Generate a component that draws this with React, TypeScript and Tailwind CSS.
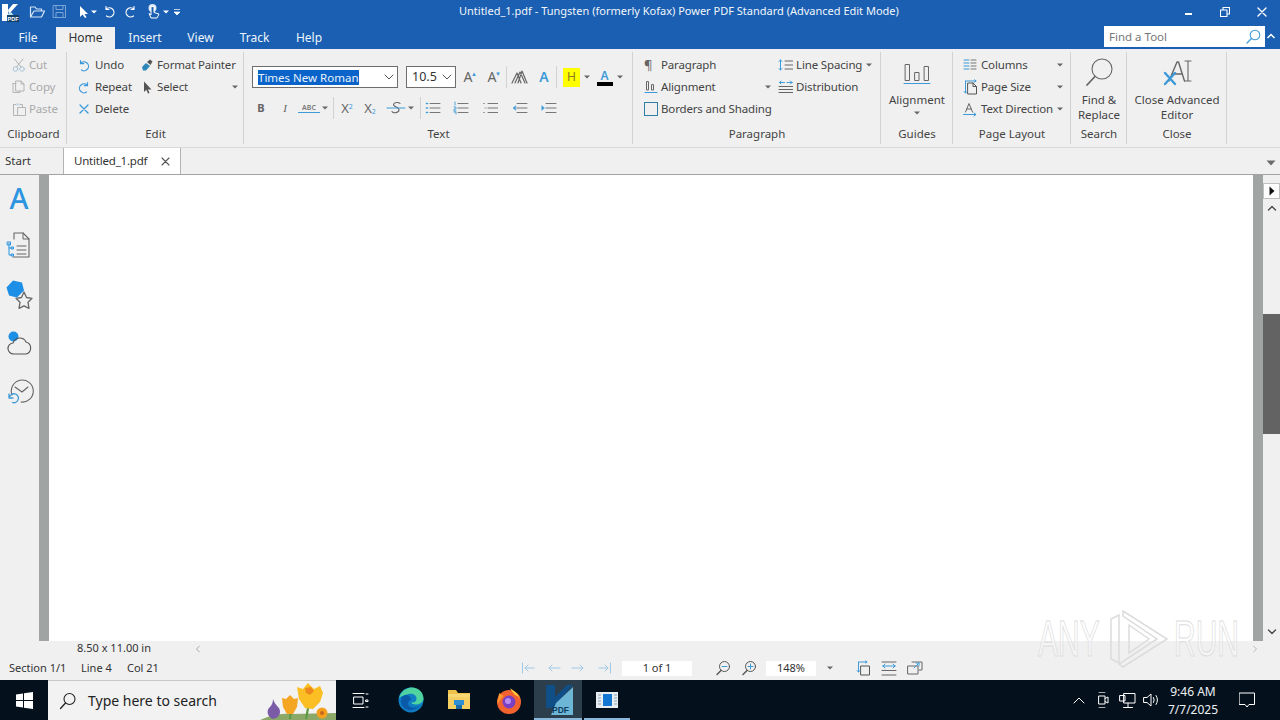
import type { ReactNode } from 'react'

const BLUE = '#3d9ad8'

function Ico({ w = 16, h = 16, children, className = '' }: { w?: number; h?: number; children: ReactNode; className?: string }) {
  return (
    <svg width={w} height={h} viewBox={`0 0 ${w} ${h}`} fill="none" strokeLinecap="round" strokeLinejoin="round" className={`shrink-0 ${className}`}>
      {children}
    </svg>
  )
}

function Caret({ color = '#666', className = '' }: { color?: string; className?: string }) {
  return (
    <svg width="10" height="6" viewBox="0 0 10 6" className={`shrink-0 ${className}`}>
      <path d="M2 1.5h6L5 4.5z" fill={color} />
    </svg>
  )
}

function Row({ icon, label, muted, children, w, iw }: { icon: ReactNode; label: string; muted?: boolean; children?: ReactNode; w?: string; iw?: string }) {
  return (
    <div className={`flex h-[22px] items-center ${w ?? ''}`}>
      <span className={`flex shrink-0 items-center ${iw ?? 'w-[17px]'}`}>{icon}</span>
      <span className={`text-[11.5px] tracking-[-0.15px] whitespace-nowrap ${muted ? 'text-[#a9a9a9]' : 'text-[#444]'}`}>{label}</span>
      {children}
    </div>
  )
}

function Group({ w, label, children }: { w: string; label: string; children: ReactNode }) {
  return (
    <div className={`relative flex h-full shrink-0 flex-col ${w}`}>
      <div className="h-[76px] pt-[5px]">{children}</div>
      <div className="flex h-[18px] items-center justify-center text-[11.5px] text-[#444]">{label}</div>
      <div className="absolute top-[3px] right-0 h-[92px] w-px bg-[#d2d2d2]" />
    </div>
  )
}

function ListIcon({ kind }: { kind: 'bullet' | 'num' | 'plain' | 'out' | 'in' }) {
  const lineX = kind === 'plain' ? 6 : 5
  return (
    <Ico w={16} h={14}>
      <path d={`M${lineX} 2.5h10M${lineX} 7h10M${lineX} 11.5h10`} stroke="#777" />
      {kind === 'bullet' && <path d="M1.5 2.5h1M1.5 7h1M1.5 11.5h1" stroke={BLUE} strokeWidth="1.6" />}
      {kind === 'num' && <path d="M2 1v3M1 6h2v2H1v2h2M1 11h2v2" stroke={BLUE} strokeWidth=".9" />}
      {kind === 'plain' && <path d="M1.5 2.5h1M3 7h1M1.5 11.5h1" stroke="#999" />}
      {kind === 'out' && <path d="M3.5 5L1 7l2.5 2z" fill={BLUE} stroke={BLUE} strokeWidth=".6" />}
      {kind === 'in' && <path d="M1 5l2.5 2L1 9z" fill={BLUE} stroke={BLUE} strokeWidth=".6" />}
    </Ico>
  )
}

function TitleBar() {
  return (
    <div className="flex h-[27px] items-center bg-[#1a5fb2] pb-[4px] text-white">
      <div className="flex w-[459px] shrink-0 items-center">
        <svg width="18" height="18" viewBox="0 0 18 18" className="ml-[1px] mt-[3px]">
          <path d="M1 0h6v17H1z" fill="#fff" />
          <path d="M7 6l5-6h5L8 10z" fill="#fff" />
          <path d="M7 10l3-2 7 9H7z" fill="#bfe0f0" />
          <rect x="6" y="11" width="12" height="7" fill="#123f66" />
          <text x="6.5" y="17" fontSize="5.5" fontWeight="700" fill="#fff" fontFamily="Liberation Sans">PDF</text>
        </svg>
        <Ico w={17} h={15} className="ml-[10px]">
          <path d="M1.5 13V3h4.5l1.500 2h5v2M1.5 13h11l3-6H5z" stroke="#d6e6f6" strokeWidth="1.2" />
        </Ico>
        <Ico w={15} h={15} className="ml-[6px]">
          <path d="M1.5 1.5h12v12h-12zM4 1.5v4h7v-4M4 13.5v-5h7v5" stroke="#7ba5d6" />
        </Ico>
        <svg width="10" height="14" viewBox="0 0 10 14" className="ml-[12px]">
          <path d="M1 1v11l2.6-2.6L6 13l1.6-.8L5.5 9H9z" fill="#fff" />
        </svg>
        <Caret color="#fff" />
        <Ico w={12} h={13} className="ml-[4px]">
          <path d="M3 1.5v3h3M3 4.2A4.6 4.6 0 1 1 3.5 11" stroke="#fff" strokeWidth="1.2" />
        </Ico>
        <Ico w={12} h={13} className="ml-[10px]">
          <path d="M9 1.5v3H6M9 4.2A4.6 4.6 0 1 0 8.5 11" stroke="#fff" strokeWidth="1.2" />
        </Ico>
        <Ico w={15} h={17} className="ml-[9px]">
          <circle cx="6.5" cy="5" r="4" fill="#dbe8f5" />
          <path d="M5 4v8l-2-1.5L5 15h6l2-4-5-1.5V4z" fill="#1a5fb2" stroke="#fff" />
        </Ico>
        <Caret color="#fff" />
        <svg width="8" height="8" viewBox="0 0 8 8" className="ml-[2px]">
          <path d="M1 1.5h6M1 4h6L4 7z" fill="#fff" stroke="#fff" strokeWidth=".7" />
        </svg>
      </div>
      <span className="text-[11px] whitespace-nowrap text-[#f2f6fb]">Untitled_1.pdf - Tungsten (formerly Kofax) Power PDF Standard (Advanced Edit Mode)</span>
      <div className="ml-auto flex items-center">
        <div className="flex w-[36px] justify-center"><div className="mt-[5px] h-[2px] w-[7px] bg-white" /></div>
        <div className="flex w-[38px] justify-center">
          <Ico w={10} h={10}><path d="M.5 3h6.5v6.5H.5zM3 3V.5h6.5V7H7" stroke="#fff" strokeWidth="1.1" /></Ico>
        </div>
        <div className="mr-[1px] flex w-[35px] justify-center">
          <Ico w={10} h={10}><path d="M1 1l8 8M9 1L1 9" stroke="#fff" strokeWidth="1.4" /></Ico>
        </div>
      </div>
    </div>
  )
}

function MenuRow() {
  const tabs = [
    { label: 'File', w: 'w-[56px]' },
    { label: 'Home', w: 'w-[59px]', active: true },
    { label: 'Insert', w: 'w-[60px]' },
    { label: 'View', w: 'w-[51px]' },
    { label: 'Track', w: 'w-[57px]' },
    { label: 'Help', w: 'w-[52px]' },
  ]
  return (
    <div className="flex h-[22px] bg-[#1a5fb2] text-[12px]">
      {tabs.map((t) => (
        <div key={t.label} className={`flex items-center justify-center ${t.w} ${t.active ? 'bg-[#f0f0f0] text-[#333]' : 'text-[#eef4fb]'}`}>
          {t.label}
        </div>
      ))}
      <div className="ml-auto mr-[15px] -mt-px flex h-[21px] w-[161px] items-center bg-white pl-[5px] text-[11.5px] text-[#777]">
        Find a Tool
        <Ico w={16} h={16} className="ml-auto mr-[4px]">
          <circle cx="10" cy="6" r="4.8" stroke={BLUE} strokeWidth="1.1" />
          <path d="M6.5 9.5L2 14" stroke={BLUE} strokeWidth="1.2" />
        </Ico>
      </div>
      <svg width="10" height="6" viewBox="0 0 10 6" className="absolute top-[33px] left-[1266px]">
        <path d="M1.5 5L5 1.5 8.5 5" stroke="#fff" strokeWidth="1.5" fill="none" />
      </svg>
    </div>
  )
}

function Ribbon() {
  return (
    <div className="flex h-[98px] bg-[#f0f0f0]">
      <Group w="w-[67px]" label="Clipboard">
        <div className="pl-[12px]">
          <Row muted label="Cut" icon={<Ico w={15} h={14}><circle cx="3.5" cy="11" r="2.3" stroke="#a8c4d8" /><circle cx="10" cy="11" r="2.3" stroke="#a8c4d8" /><path d="M4.5 9L11 1M9 9L2.5 1" stroke="#b0b0b0" /></Ico>} />
          <Row muted label="Copy" icon={<Ico w={15} h={15}><path d="M1 3.5h3M1 3.5v9h7v-1.500M4 1h5l3 3v7H4zM9 1v3h3" stroke="#b4b4b4" /></Ico>} />
          <Row muted label="Paste" icon={<Ico w={15} h={15}><path d="M1.5 2.5h9v3M1.5 2.5v11H6M6 5.5h7.500v8H6z" stroke="#b4b4b4" /><path d="M4 1.500h4v2H4z" fill="#c8d8e4" /></Ico>} />
        </div>
      </Group>

      <Group w="w-[177px]" label="Edit">
        <div className="pl-[11px]">
          <div className="flex">
            <Row w="w-[62px]" label="Undo" icon={<Ico w={12} h={13}><path d="M2.5 1.5v3.200h3.200M2.5 4.500A4.500 4.500 0 1 1 3.5 11" stroke={BLUE} strokeWidth="1.2" /></Ico>} />
            <Row label="Format Painter" icon={<Ico w={14} h={14}><path d="M2 9l4-4 4 3-4 4.500H3z" fill="#2c86b8" /><path d="M7 4l3-2.500 2.500 2-2 3.500z" fill="#555" /></Ico>} />
          </div>
          <div className="flex">
            <Row w="w-[62px]" label="Repeat" icon={<Ico w={12} h={13}><path d="M9.5 1.5v3.200H6.300M9.5 4.500A4.500 4.500 0 1 0 8.500 11" stroke={BLUE} strokeWidth="1.2" /></Ico>} />
            <Row w="w-[100px]" label="Select" icon={<svg width="9" height="13" viewBox="0 0 9 13" className="ml-[3px]"><path d="M1 .5V11l2.300-2.200L5 12.500l1.500-.6L5 8.500h3.500z" fill="#555" /></svg>}>
              <Caret className="ml-auto" />
            </Row>
          </div>
          <Row label="Delete" icon={<Ico w={12} h={12}><path d="M2 2l8 8M10 2l-8 8" stroke={BLUE} strokeWidth="1.3" /></Ico>} />
        </div>
      </Group>

      <Group w="w-[389px]" label="Text">
        <div className="pl-[8px] pt-[12px]">
          <div className="flex h-[22px] items-center">
            <div className="flex h-[22px] w-[146px] items-center border border-[#6d6d6d] bg-white pl-[5px] text-[11.5px]">
              <span className="bg-[#0a63c9] leading-[15px] whitespace-nowrap text-[#e8f2fc]">Times New Roman</span>
              <Ico w={10} h={6} className="ml-auto mr-[3px]"><path d="M1 1l4 4 4-4" stroke="#555" /></Ico>
            </div>
            <div className="ml-[8px] flex h-[22px] w-[50px] items-center border border-[#6d6d6d] bg-white pl-[5px] text-[12.5px] text-[#333]">
              10.5
              <Ico w={10} h={6} className="ml-auto mr-[3px]"><path d="M1 1l4 4 4-4" stroke="#555" /></Ico>
            </div>
            <span className="relative ml-[3px] w-[18px] text-center text-[14px] leading-none text-[#666]">A<span className="absolute top-[1px] right-0 text-[6px] text-[#3d9ad8]">▲</span></span>
            <span className="relative ml-[6px] w-[18px] text-center text-[14px] leading-none text-[#666]">A<span className="absolute top-[1px] right-0 text-[6px] text-[#3d9ad8]">▼</span></span>
            <div className="ml-[5px] h-[22px] w-px bg-[#d2d2d2]" />
            <Ico w={20} h={16} className="ml-[3px]">
              <path d="M2 14L7 4l4 10M5 14l5-11 5 11M8 14l4-12 5 12" stroke="#666" strokeWidth="1.2" />
            </Ico>
            <span className="ml-[5px] w-[18px] text-center text-[14px] leading-none font-semibold text-[#3d9ad8]">A</span>
            <div className="ml-[3px] h-[22px] w-px bg-[#d2d2d2]" />
            <div className="ml-[6px] flex h-[19px] w-[17px] items-center justify-center bg-[#ffff00] text-[12px] text-[#8a7a20]">H</div>
            <Caret className="ml-[2px]" />
            <div className="ml-[4px] flex w-[17px] flex-col items-center">
              <span className="text-[12px] leading-[13px] font-semibold text-[#3d9ad8]">A</span>
              <div className="h-[4px] w-[16px] bg-black" />
            </div>
            <Caret className="ml-[2px]" />
          </div>
          <div className="mt-[9px] flex h-[22px] items-center text-[#666]">
            <span className="w-[18px] text-center text-[11px] font-bold">B</span>
            <span className="ml-[6px] w-[18px] text-center font-['Liberation_Serif'] text-[11px] italic">I</span>
            <span className="ml-[4px] w-[22px] border-b border-[#3d9ad8] text-center text-[7px] leading-[8px] font-semibold text-[#777]">ABC</span>
            <Caret />
            <div className="ml-[3px] h-[22px] w-px bg-[#d2d2d2]" />
            <span className="ml-[4px] w-[18px] text-center text-[13px] leading-none">X<sup className="text-[7px] text-[#3d9ad8]">2</sup></span>
            <span className="ml-[5px] w-[18px] text-center text-[13px] leading-none">X<sub className="text-[7px] text-[#3d9ad8]">2</sub></span>
            <Ico w={20} h={16} className="ml-[7px]">
              <path d="M14 3.500c-1-1.500-6-1.500-6.500 1C7 7 13 6.500 13 10c0 3-6 3.500-7 1.500" stroke="#666" strokeWidth="1.1" />
              <path d="M1 8h18" stroke={BLUE} />
            </Ico>
            <Caret />
            <div className="ml-[4px] h-[22px] w-px bg-[#d2d2d2]" />
            <span className="ml-[4px]"><ListIcon kind="bullet" /></span>
            <span className="ml-[12px]"><ListIcon kind="num" /></span>
            <span className="ml-[13px]"><ListIcon kind="plain" /></span>
            <span className="ml-[14px]"><ListIcon kind="out" /></span>
            <span className="ml-[13px]"><ListIcon kind="in" /></span>
          </div>
        </div>
      </Group>

      <Group w="w-[248px]" label="Paragraph">
        <div className="pl-[11px]">
          <div className="flex">
            <Row w="w-[134px]" label="Paragraph" icon={<span className="text-[13px] leading-none text-[#666]">¶</span>} />
            <Row w="w-[96px]" iw="w-[18px]" label="Line Spacing" icon={<Ico w={15} h={14}><path d="M2.5 2v10M1 3.5L2.5 2 4 3.5M1 10.500L2.5 12 4 10.500" stroke={BLUE} /><path d="M7 3h8M7 7h8M7 11h8" stroke="#666" /></Ico>}>
              <Caret className="ml-auto" />
            </Row>
          </div>
          <div className="flex">
            <Row w="w-[134px]" label="Alignment" icon={<Ico w={14} h={14}><path d="M2.5 2v8h2V2zM7.5 5v5h2V5z" stroke="#666" /><path d="M1 12.500h12" stroke={BLUE} /></Ico>}>
              <Caret className="ml-auto mr-[5px]" />
            </Row>
            <Row iw="w-[18px]" label="Distribution" icon={<Ico w={15} h={14}><path d="M1.5 2.5h5M9 2.5h5M1.5 2.5L3 1M1.5 2.5L3 4M14 2.500L12.5 1M14 2.500L12.5 4" stroke={BLUE} /><path d="M1 6.500h14M1 9.500h14M1 12.500h14" stroke="#666" /></Ico>} />
          </div>
          <Row label="Borders and Shading" icon={<div className="h-[14px] w-[14px] border border-[#2f7fa8]" />} />
        </div>
      </Group>

      <Group w="w-[72px]" label="Guides">
        <div className="flex flex-col items-center">
          <div className="flex h-[38px] items-center">
            <Ico w={28} h={24}>
              <path d="M2.5 3.500h4v16h-4zM12 11.500h4v8h-4zM21.500 5.500h4v14h-4z" stroke="#666" />
              <path d="M1 22.500h26" stroke={BLUE} />
            </Ico>
          </div>
          <span className="text-[11.5px] leading-[15px] text-[#444]">Alignment</span>
          <Caret className="mt-[3px]" />
        </div>
      </Group>

      <Group w="w-[118px]" label="Page Layout">
        <div className="pl-[10px]">
          <Row w="w-[102px]" iw="w-[18px]" label="Columns" icon={<Ico w={14} h={14}><path d="M1 2h5M1 5h5M1 8h5M1 11h5" stroke={BLUE} /><path d="M8 2h5M8 5h5M8 8h5M8 11h5" stroke="#777" /></Ico>}>
            <Caret className="ml-auto" />
          </Row>
          <Row w="w-[102px]" iw="w-[18px]" label="Page Size" icon={<Ico w={15} h={16}><path d="M5 4h5l3.500 3.500V15H5zM10 4v3.500h3.500" stroke="#555" /><path d="M2.5 2v12M1 12.500L2.5 14 4 12.500M3 2h10M11.500.8L13 2l-1.500 1.200" stroke={BLUE} /></Ico>}>
            <Caret className="ml-auto" />
          </Row>
          <Row w="w-[102px]" iw="w-[18px]" label="Text Direction" icon={<Ico w={15} h={15}><path d="M2.5 10L6 1.500 9.5 10M3.800 7h4.400" stroke="#666" /><path d="M.5 12.500h12M11 11l2 1.500-2 1.500" stroke={BLUE} /></Ico>}>
            <Caret className="ml-auto" />
          </Row>
        </div>
      </Group>

      <Group w="w-[56px]" label="Search">
        <div className="flex flex-col items-center text-[11.5px] leading-[15px] text-[#444]">
          <div className="flex h-[38px] items-start pt-[3px]">
            <Ico w={30} h={31}>
              <circle cx="18" cy="12" r="10" stroke="#666" strokeWidth="1.1" />
              <path d="M11 19.500L3 28" stroke="#666" strokeWidth="1.8" />
            </Ico>
          </div>
          <span>Find &amp;</span>
          <span>Replace</span>
        </div>
      </Group>

      <Group w="w-[100px]" label="Close">
        <div className="flex flex-col items-center text-[11.5px] leading-[15px] text-[#444]">
          <div className="flex h-[38px] items-start pt-[5px]">
            <Ico w={30} h={28}>
              <path d="M7 22L15 3h1.500l6 19M10 15h10" stroke="#666" strokeWidth="1.4" />
              <path d="M23 2h6M26 2v20M23 22h6" stroke="#666" strokeWidth="1.1" />
              <path d="M3 14l10 11M13 14L3 25" stroke={BLUE} strokeWidth="2.4" />
            </Ico>
          </div>
          <span className="whitespace-nowrap">Close Advanced</span>
          <span>Editor</span>
        </div>
      </Group>
    </div>
  )
}

function DocTabs() {
  return (
    <div className="flex h-[28px] border-y border-t-[#d8d8d8] border-b-[#a3a3a3] bg-[#f0f0f0] text-[#333]">
      <div className="flex w-[63px] items-center pl-[5px] text-[11.5px]">Start</div>
      <div className="flex w-[118px] items-center border-x border-[#b4b4b4] bg-white pl-[10px] text-[11.5px] tracking-[-0.2px]">
        Untitled_1.pdf
        <Ico w={9} h={9} className="ml-auto mr-[10px]"><path d="M1 1l7 7M8 1L1 8" stroke="#555" strokeWidth="1.1" /></Ico>
      </div>
      <svg width="10" height="6" viewBox="0 0 10 6" className="ml-auto mr-[4px] mt-[12px]">
        <path d="M.5.5h9L5 5.500z" fill="#6b6b6b" />
      </svg>
    </div>
  )
}

function Sidebar() {
  return (
    <div className="flex w-[39px] shrink-0 flex-col items-center bg-[#f0f0f0]">
      <span className="mt-[7px] mr-[1px] flex h-[30px] items-center text-[29px] leading-none font-medium text-[#2d95e0]">A</span>
      <Ico w={24} h={28} className="mt-[19px] mr-[3px]">
        <path d="M8 8V2h9l6 6v18H7" stroke="#666" strokeWidth="1.1" />
        <path d="M17 2v6h6M11 15h9M11 19h9M11 23h9" stroke="#666" />
        <path d="M3 12v12h3M3 17h3M1.5 11h3v3h-3zM5.500 16h2v2h-2zM5.500 23h2v2h-2z" stroke="#2d95e0" />
      </Ico>
      <Ico w={28} h={30} className="mt-[21px]">
        <path d="M7 .5l9 2 2 8-7 7-8-2-2.500-8z" fill="#1d8fe6" />
        <path d="M18 12l2.500 5.500 5.500.8-4 4 1 6-5-2.500-5 2.500 1-6-4-4 5.500-.8z" fill="#f0f0f0" stroke="#666" strokeWidth="1.3" />
      </Ico>
      <Ico w={26} h={26} className="mt-[20px]">
        <circle cx="6.5" cy="6.5" r="5" fill="#1d8fe6" />
        <path d="M7 24a5.500 5.500 0 0 1-1-11 7 7 0 0 1 13-1 6.200 6.200 0 0 1 0 12z" stroke="#555" strokeWidth="1.1" fill="none" />
      </Ico>
      <Ico w={26} h={26} className="mt-[22px] ml-[2px]">
        <path d="M4 17A11 11 0 1 1 13 24" stroke="#666" strokeWidth="1.1" />
        <path d="M7 9l7 5 6-5" stroke="#666" strokeWidth="1.1" />
        <path d="M1 16v4h4M1.500 19.500a4.500 4.500 0 1 1 3 5" stroke="#3d9ad8" strokeWidth="1.3" />
      </Ico>
    </div>
  )
}

function VScroll() {
  return (
    <div className="flex w-[17px] shrink-0 flex-col items-center bg-[#f0f0f0]">
      <div className="h-[8px] w-full" />
      <div className="flex h-[16px] w-full items-center justify-center border border-[#c0c0c0] bg-white">
        <svg width="6" height="10" viewBox="0 0 6 10"><path d="M.5.5l5 4.500-5 4.500z" fill="#111" /></svg>
      </div>
      <div className="flex h-[18px] items-center">
        <Ico w={10} h={6}><path d="M1.5 5L5 1.5 8.5 5" stroke="#444" strokeWidth="1.3" /></Ico>
      </div>
      <div className="h-[97px]" />
      <div className="h-[120px] w-full bg-[#636363]" />
      <div className="flex-1" />
      <Ico w={10} h={6} className="mb-[6px]"><path d="M1.5 1L5 4.500 8.5 1" stroke="#444" strokeWidth="1.3" /></Ico>
    </div>
  )
}

function StatusBar() {
  return (
    <div className="h-[39px] bg-[#f0f0f0] text-[11px] text-[#333]">
      <div className="flex h-[15px] items-center">
        <span className="ml-[77px] w-[118px]">8.50 x 11.00 in</span>
        <Ico w={6} h={8}><path d="M4.5 1l-3 3 3 3" stroke="#aaa" /></Ico>
        <Ico w={6} h={8} className="ml-auto mr-[22px]"><path d="M1.5 1l3 3-3 3" stroke="#bbb" /></Ico>
      </div>
      <div className="flex h-[24px] items-center">
        <span className="ml-[9px] w-[72px]">Section 1/1</span>
        <span className="w-[46px]">Line 4</span>
        <span className="w-[394px]">Col 21</span>
        <Ico w={14} h={12}><path d="M1.5 1v10M13 6H4M7 3L4 6l3 3" stroke="#9fc8e6" /></Ico>
        <Ico w={14} h={12} className="ml-[12px]"><path d="M13 6H2M5 3L2 6l3 3" stroke="#9fc8e6" /></Ico>
        <Ico w={14} h={12} className="ml-[10px]"><path d="M1 6h11M9 3l3 3-3 3" stroke="#9fc8e6" /></Ico>
        <Ico w={14} h={12} className="ml-[13px]"><path d="M12.5 1v10M1 6h9M7 3l3 3-3 3" stroke="#9fc8e6" /></Ico>
        <div className="ml-[10px] flex h-[15px] w-[70px] items-center justify-center bg-white">1 of 1</div>
        <Ico w={16} h={16} className="ml-[23px]">
          <circle cx="9.5" cy="6.500" r="5" stroke="#555" />
          <path d="M7 6.500h5" stroke={BLUE} />
          <path d="M6 10.500l-4 4" stroke="#555" strokeWidth="1.4" />
        </Ico>
        <Ico w={16} h={16} className="ml-[10px]">
          <circle cx="9.5" cy="6.500" r="5" stroke="#555" />
          <path d="M7 6.500h5M9.5 4v5" stroke={BLUE} />
          <path d="M6 10.500l-4 4" stroke="#555" strokeWidth="1.4" />
        </Ico>
        <div className="ml-[9px] flex h-[15px] w-[50px] items-center justify-center bg-white">148%</div>
        <Caret className="ml-[9px]" />
        <Ico w={15} h={16} className="ml-[21px]">
          <path d="M5 6h8.500v9H5z" stroke="#555" />
          <path d="M2.5 2v10M1 10.500L2.5 12 4 10.500M3 2h8M9.5 1L11 2 9.5 3" stroke={BLUE} />
        </Ico>
        <Ico w={16} h={16} className="ml-[10px]">
          <path d="M1 2h14M1 15h14M1 10.500h14" stroke="#666" />
          <path d="M2 6h12M2 6l2-2M2 6l2 2M14 6l-2-2M14 6l-2 2" stroke={BLUE} />
        </Ico>
        <Ico w={16} h={16} className="ml-[10px]">
          <path d="M5 2h10v8h-3M1 6h10v8H1z" stroke="#666" />
          <path d="M7 8l5-5M9 3h3v3" stroke={BLUE} />
        </Ico>
      </div>
    </div>
  )
}

function Taskbar() {
  return (
    <div className="flex h-[40px] bg-[#04111d] text-white">
      <div className="flex w-[48px] items-center justify-center">
        <svg width="17" height="17" viewBox="0 0 17 17"><path d="M0 2.400l7-1V8H0zM8 1.200L17 0v8H8zM0 9h7v6.600l-7-1zM8 9h9v8l-9-1.200z" fill="#fff" /></svg>
      </div>
      <div className="relative flex w-[288px] items-center overflow-hidden border-t border-[#c8c8c8] bg-[#f2f2f2] pl-[11px] text-[#222]">
        <Ico w={18} h={18}>
          <circle cx="10.5" cy="7" r="5.500" stroke="#222" strokeWidth="1.1" />
          <path d="M6.5 11l-5 5.500" stroke="#222" strokeWidth="1.3" />
        </Ico>
        <span className="ml-[11px] text-[14px]">Type here to search</span>
        <svg width="84" height="40" viewBox="0 0 84 40" className="absolute top-0 right-0">
          <path d="M6 40q18-9 34-7l44-1v8z" fill="#8ba868" />
          <path d="M21 38c-6-2-7-9-3-12 2-2 3-5 3-8 1 3 3 6 5 8 4 4 2 11-5 12z" fill="#7b5aa8" />
          <path d="M38 38l1-10M54 38l3-16" stroke="#5d9a46" strokeWidth="2.2" />
          <path d="M30 17l4 1 4-4 4 4 4-1-1 9-4 7h-6l-4-7z" fill="#f4a623" />
          <path d="M45 6l6 2 5-6 6 6 6-3 3 7-3 9-7 7-8-1-6-9z" fill="#fbbf24" />
          <path d="M53 7l6-1 3 4-4 4-4-2z" fill="#ee8a1d" />
          <circle cx="70" cy="32" r="5.500" fill="#f4a11f" />
          <circle cx="70" cy="32" r="2" fill="#c7651a" />
        </svg>
      </div>
      <div className="flex w-[48px] items-center justify-center">
        <Ico w={17} h={17}>
          <path d="M1 1.500h11M1 15.500h11M2 5h9v7H2z" stroke="#fff" />
          <path d="M14 2h2M14 8h2v1.500h-2zM14 15h2" stroke="#fff" />
        </Ico>
      </div>
      <div className="ml-[3px] flex w-[48px] items-center justify-center">
        <svg width="26" height="26" viewBox="0 0 26 26">
          <circle cx="13" cy="13" r="12.5" fill="#0f7cc4" />
          <path d="M1 11C3 3 10 .5 14 .5c7 0 11.500 5.500 11.500 11 0 4-4 6-8 6-3 0-4-1-4-2 3 0 5-1 5-4S15 6 11 7c-5 1-8 2-10 4z" fill="#4fd3a0" />
          <path d="M13 13c-2 0-4 3-2 6 2 2 7 3 11-1-3 5-11 7-16 3-3-3-4-7-2-11 2-2 5-3 7-1 1 1 2 2 2 4z" fill="#0a5aa8" />
        </svg>
      </div>
      <div className="flex w-[48px] items-center justify-center">
        <svg width="24" height="22" viewBox="0 0 24 22">
          <path d="M1 1h8l2 3h12v4H1z" fill="#eec14b" />
          <path d="M1 5h22v14H1z" fill="#f8d874" />
          <path d="M1 8h22v12H1z" fill="#f5cf62" />
          <path d="M7 11h10v5H7z" fill="#2f8fd4" />
          <path d="M9 16h6v4H9z" fill="#1c6aa8" />
        </svg>
      </div>
      <div className="ml-[2px] flex w-[48px] items-center justify-center">
        <svg width="26" height="27" viewBox="0 0 26 27">
          <circle cx="13" cy="15" r="12" fill="#f2622e" />
          <path d="M14 1c4 3 9 6 11 13 0-1-2-5-6-6-1-2-4-4-5-7z" fill="#ffce3d" />
          <path d="M3 6c0 5-2 7-1 11 1-3 3-6 6-8-2-1-4-2-5-3z" fill="#ff9a2f" />
          <circle cx="13" cy="15" r="6.5" fill="#7b3fc4" />
          <circle cx="12" cy="14" r="3" fill="#b98df0" />
        </svg>
      </div>
      <div className="relative ml-[1px] flex w-[48px] items-center justify-center bg-[#2c3e4c]">
        <svg width="31" height="31" viewBox="0 0 31 31">
          <path d="M3 0h9v23H3z" fill="#0f4e86" />
          <path d="M12 12L24 0h6L12 20z" fill="#0f4e86" />
          <path d="M13 18L30 2v28H8z" fill="#6db6d6" />
          <text x="9" y="28" fontSize="8.5" fontWeight="700" fill="#0d3b5e" fontFamily="Liberation Sans">PDF</text>
        </svg>
        <div className="absolute bottom-0 left-0 h-[2px] w-full bg-[#89b8dc]" />
      </div>
      <div className="relative ml-[1px] flex w-[48px] items-center justify-center">
        <svg width="24" height="18" viewBox="0 0 24 18">
          <path d="M1 1h22v16H1z" fill="#e9eef2" />
          <path d="M8 3h9v12H8z" fill="#1677d2" />
          <path d="M3 4h3M3 7h3M3 10h3M3 13h3M19 4h3M19 7h3M19 10h3M19 13h3" stroke="#8aa0b4" />
        </svg>
        <div className="absolute bottom-0 left-[1px] h-[2px] w-[46px] bg-[#89b8dc]" />
      </div>
      <div className="ml-auto flex items-center">
        <div className="flex w-[24px] justify-center">
          <Ico w={12} h={7}><path d="M1 6l5-5 5 5" stroke="#fff" /></Ico>
        </div>
        <div className="flex w-[24px] justify-center">
          <Ico w={14} h={18}>
            <path d="M3 5h6v8H3zM9 7.500L12 6v6L9 10.500" stroke="#fff" />
            <path d="M3 1.500h6M3 16.500h6" stroke="#aaa" />
          </Ico>
        </div>
        <div className="flex w-[24px] justify-center">
          <Ico w={17} h={17}>
            <path d="M5 1.500h11V11H5zM1 3.500h5V9H1zM9 11v4M4.500 15.500h9" stroke="#fff" />
          </Ico>
        </div>
        <div className="flex w-[24px] justify-center">
          <Ico w={17} h={16}>
            <path d="M1 5.500h3L8 2v12L4 10.500H1zM10.500 5.500q1.500 2.500 0 5M13 3.500q3 4.500 0 9" stroke="#fff" />
          </Ico>
        </div>
        <div className="mt-[1px] flex w-[60px] flex-col items-center text-[12px] leading-[18px] text-[#eef1f4]">
          <span>9:46 AM</span>
          <span>7/7/2025</span>
        </div>
        <div className="flex w-[48px] justify-center">
          <Ico w={16} h={16}><path d="M.5 1h15v11.500H10l-2 2.500-2-2.500H.5z" stroke="#fff" /></Ico>
        </div>
        <div className="w-[9px]" />
      </div>
    </div>
  )
}

export default function App() {
  return (
    <div className="relative flex h-[720px] w-[1280px] flex-col overflow-hidden bg-white font-['Noto_Sans',sans-serif]">
      <TitleBar />
      <MenuRow />
      <Ribbon />
      <DocTabs />
      <div className="flex min-h-0 flex-1">
        <Sidebar />
        <div className="w-[10px] shrink-0 bg-[#a0a5a3]" />
        <div className="flex-1 bg-white" />
        <div className="w-[10px] shrink-0 bg-[#a0a5a3]" />
        <VScroll />
      </div>
      <StatusBar />
      <Taskbar />
      {/* ANY.RUN watermark */}
      <div className="pointer-events-none absolute top-[607px] left-[1038px] flex items-center gap-[5px] font-['Liberation_Sans'] text-[50px] leading-none text-white/40 [-webkit-text-stroke:1px_#dcdcdc]">
        <span className="inline-block w-[66px] origin-left scale-x-[.6] whitespace-nowrap">ANY</span>
        <svg width="60" height="64" viewBox="0 0 60 64" fill="none" stroke="#dcdcdc">
          <path d="M2 12v40l8 4V8zM14 4l44 28-44 28-4-3 38-25L14 9zM20 18l20 14-20 14z" strokeWidth="1.5" />
        </svg>
        <span className="inline-block w-[66px] origin-left scale-x-[.6] whitespace-nowrap">RUN</span>
      </div>
    </div>
  )
}
